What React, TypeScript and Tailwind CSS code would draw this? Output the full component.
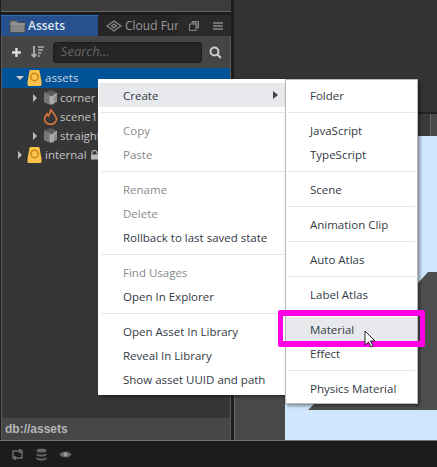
const font = "font-['Open_Sans','Liberation_Sans',sans-serif]";

function Item({ label, hi, dim, arrow }: { label: string; hi?: boolean; dim?: boolean; arrow?: boolean }) {
  return (
    <div className={`h-6 flex items-center pl-6 pr-1 justify-between text-[11.5px] ${hi ? 'bg-[#e8e9ed]' : ''} ${dim ? 'text-[#8a8a8a]' : 'text-[#333a44]'}`}>
      <span className="pt-[2px]">{label}</span>
      {arrow && <span className="border-y-[4px] border-l-[5px] border-y-transparent border-l-[#444] mr-1" />}
    </div>
  );
}
const Sep = () => <div className="h-px bg-[#e4e4ea] mx-0.5 my-[5px]" />;

function Box({ color = '#fbc24a' }: { color?: string }) {
  return (
    <svg width="15" height="18" viewBox="0 0 15 18" className="shrink-0 ml-[1px] mr-[1px]">
      <path d="M3.500 1h8a1 1 0 0 1 1 .8l2 11v2.700a1.500 1.500 0 0 1-1.500 1.500H2a1.500 1.500 0 0 1-1.500-1.500v-2.700l2-11a1 1 0 0 1 1-.8z" fill={color} />
      <circle cx="7.500" cy="8" r="3.700" fill="none" stroke="#c5841c" strokeWidth="1.400" />
    </svg>
  );
}
function Cube() {
  return (
    <svg width="15" height="15" viewBox="0 0 15 15" className="shrink-0 ml-[2px]">
      <path d="M7.500 .5l6.500 2.500v9l-6.500 2.500L1 12V3z" fill="#8f8f8f" />
      <path d="M1 3l6.500-2.500L14 3l-4 1.500-.5 3H7V5z" fill="#5a5a5a" />
      <path d="M1 3l5 2v9.500L1 12z" fill="#777777" />
      <path d="M7 6h3l4-3v2l-3 2v7l-4 .8z" fill="#a8a8a8" />
    </svg>
  );
}
function Flame() {
  return (
    <svg width="15" height="17" viewBox="0 0 15 17" className="shrink-0 ml-[2px]">
      <path d="M8 1C8.500 4.500 13.500 7 13.500 11a6 5.300 0 0 1-12 0C1.500 9 3 7.500 4 6c.5 1 1 1.500 1.500 2C6.500 6 8 3.500 8 1z" fill="none" stroke="#d8743a" strokeWidth="1.700" />
    </svg>
  );
}
function Row({ pad, label, tri, sel, icon, lock, h = 'h-[19px]' }: { pad: string; label: string; tri?: 'down' | 'right'; sel?: boolean; icon: React.ReactNode; lock?: boolean; h?: string }) {
  return (
    <div className={`${h} flex items-center text-[11.5px] ${pad} ${sel ? 'bg-[#005397] text-[#cdd6df]' : 'text-[#c4c4c4]'}`}>
      <span className="w-[13px] flex items-center justify-center shrink-0">
        {tri === 'down' && <span className="border-x-[4px] border-t-[4px] border-x-transparent border-t-[#ccc]" />}
        {tri === 'right' && <span className="border-y-[4px] border-l-[4px] border-y-transparent border-l-[#bbb]" />}
      </span>
      {icon}
      <span className="ml-[2px]">{label}</span>
      {lock && (
        <svg width="9" height="10" viewBox="0 0 9 10" className="ml-[3px]">
          <path d="M2 4.500V3a2.500 2.500 0 0 1 5 0v1.500" fill="none" stroke="#bbb" strokeWidth="1.200" />
          <rect x="1" y="4.500" width="7" height="5" fill="#bbb" />
        </svg>
      )}
    </div>
  );
}

export default function App() {
  return (
    <div className={`relative w-[437px] h-[467px] overflow-hidden bg-[#1c1c1c] ${font}`}>
      <div className="flex h-[441px] border-b border-[#757575]">
        <div className="w-[234px] shrink-0 flex flex-col">
          <div className="h-[12px] bg-[#3c3c3c] border-b border-[#666] mr-[3px] ml-px" />
          <div className="h-[3px]" />
          <div className="h-[21px] flex bg-[#252525] mr-[3px] ml-px items-stretch">
            <div className="w-[97px] bg-[#27508f] border-t border-[#2f6fc0] flex items-center pl-2 gap-[2px] text-[12px] font-semibold text-[#dfe6ef]">
              <svg width="17" height="15" viewBox="0 0 17 15" className="shrink-0"><path d="M1 1.500h6l2 2h7v10H1z" fill="#858585" stroke="#4a4a4a" /><path d="M1 5h15" stroke="#a0a0a0" /></svg>
              Assets
            </div>
            <div className="w-[80px] overflow-hidden whitespace-nowrap flex items-center pl-2 gap-[3px] text-[12px] text-[#9a9a9a]">
              <svg width="16" height="12" viewBox="0 0 16 12" className="shrink-0"><path d="M8 1l7 5-7 5-7-5zM5.500 6L8 4l2.500 2L8 8z" fill="none" stroke="#8a8a8a" strokeWidth="1.300" /></svg>
              Cloud Function
            </div>
            <div className="flex-1 bg-[#2a2a2a] flex items-center gap-[14px] pl-[11px]">
              <svg width="10" height="10" viewBox="0 0 10 10"><path d="M3 .5h6.500V7H8V2H3zM.5 3h6.500v6.500H.500z" fill="none" stroke="#8a8a8a" /></svg>
              <svg width="10" height="8" viewBox="0 0 10 8"><path d="M0 1h10M0 4h10M0 7h10" stroke="#8a8a8a" strokeWidth="1.300" /></svg>
            </div>
          </div>
          <div className="flex-1 flex flex-col mr-[3px] ml-px border-x border-[#5c5c5c] bg-[#363636]">
            <div className="h-[32px] bg-[#454545] flex items-center pl-[9px] pr-2">
              <svg width="11" height="11" viewBox="0 0 11 11"><path d="M5.500 1v9M1 5.500h9" stroke="#ddd" strokeWidth="2.400" /></svg>
              <svg width="14" height="13" viewBox="0 0 14 13" className="ml-[9px]"><path d="M3 0v10M0.500 8l2.500 3 2.500-3" fill="none" stroke="#b0b0b0" strokeWidth="1.800" /><path d="M7 1h6M7 4h5M7 7h3.500M7 10h2" stroke="#b0b0b0" strokeWidth="1.400" /></svg>
              <div className="ml-[8px] w-[150px] h-[21px] bg-[#252525] rounded-[3px] border border-[#1c1c1c] flex items-center pl-[7px] text-[13px] italic text-[#666]">Search...</div>
              <svg width="13" height="13" viewBox="0 0 13 13" className="ml-[7px]"><circle cx="5.500" cy="5.500" r="4" fill="none" stroke="#ccc" strokeWidth="2" /><path d="M8.500 8.500l3.500 3.500" stroke="#ccc" strokeWidth="2.200" /></svg>
            </div>
            <Row pad="pl-[11px]" label="assets" tri="down" sel icon={<Box />} h="h-[20px]" />
            <Row pad="pl-[26px]" label="corner" tri="right" icon={<Cube />} />
            <Row pad="pl-[26px]" label="scene1" icon={<Flame />} />
            <Row pad="pl-[26px]" label="straight" tri="right" icon={<Cube />} />
            <Row pad="pl-[11px]" label="internal" tri="right" icon={<Box />} lock />
            <div className="flex-1" />
            <div className="h-[22px] bg-[#474747] flex items-center pl-[3px] text-[12px] font-bold text-[#b5b5b5] font-['Liberation_Sans']">db://assets</div>
          </div>
        </div>
        <div className="flex-1 flex flex-col">
          <div className="h-[112px] bg-[#333333]" />
          <div className="h-[2px] bg-[#222222]" />
          <div className="h-[22px] bg-[#3a3a3a] flex justify-end">
            <div className="w-[7px] bg-[#4a4a4a] border-l border-[#666]" />
          </div>
          <div className="flex-1 flex">
            <div className="w-[51px] bg-[#484848] border-l border-[#6a6a6a]" />
            <div className="relative flex-1 bg-[#d0e6fd] overflow-hidden">
              <svg className="absolute left-0 top-0" width="152" height="304" viewBox="0 0 152 304">
                <polygon points="152,136 143,136 133,147 29,268 23,274 152,274" fill="#4e4e4e" />
              </svg>
            </div>
          </div>
        </div>
      </div>
      <div className="h-[26px] flex items-center gap-[12px] pl-[11px] pt-px">
        <svg width="13" height="11" viewBox="0 0 13 11"><path d="M2 8V2h8M11 3v6H3M8 0l3 2-3 2M5 7L2 9l3 2" fill="none" stroke="#6a6a6a" strokeWidth="1.500" /></svg>
        <svg width="11" height="13" viewBox="0 0 11 13"><ellipse cx="5.500" cy="2.500" rx="5" ry="2" fill="#666" /><path d="M.5 5c1 2 9 2 10 0v2c-1 2-9 2-10 0zM.5 9c1 2 9 2 10 0v2c-1 2-9 2-10 0z" fill="#666" /></svg>
        <svg width="13" height="9" viewBox="0 0 13 9"><path d="M.5 4.500C3 .5 10 .5 12.500 4.500 10 8.500 3 8.500.5 4.500z" fill="#666" /><circle cx="6.500" cy="4.500" r="2" fill="#999" /></svg>
      </div>

      <div className="absolute left-[98px] top-[79px] w-[188px] h-[316px] bg-white border-l border-white py-1 shadow-[2px_2px_3px_rgba(0,0,0,0.4)]">
        <Item label="Create" hi arrow />
        <Sep />
        <Item label="Copy" dim />
        <Item label="Paste" dim />
        <Sep />
        <Item label="Rename" dim />
        <Item label="Delete" dim />
        <Item label="Rollback to last saved state" />
        <Sep />
        <Item label="Find Usages" dim />
        <Item label="Open In Explorer" />
        <Sep />
        <Item label="Open Asset In Library" />
        <Item label="Reveal In Library" />
        <Item label="Show asset UUID and path" />
      </div>
      <div className="absolute left-[285px] top-[79px] w-[133px] h-[325px] bg-white border border-[#b8b8b8] pt-[3px] pb-1 shadow-[2px_2px_3px_rgba(0,0,0,0.4)]">
        <Item label="Folder" />
        <Sep />
        <Item label="JavaScript" />
        <Item label="TypeScript" />
        <Sep />
        <Item label="Scene" />
        <Sep />
        <Item label="Animation Clip" />
        <Sep />
        <Item label="Auto Atlas" />
        <Sep />
        <Item label="Label Atlas" />
        <Sep />
        <Item label="Material" hi />
        <Item label="Effect" />
        <Sep />
        <Item label="Physics Material" />
      </div>
      <div className="absolute left-[278px] top-[310px] w-[147px] h-[37px] border-x-[5px] border-y-[6px] border-[#ff00e6] rounded-[2px]" />
      <svg className="absolute left-[364px] top-[330px]" width="13" height="19" viewBox="0 0 13 19">
        <path d="M1 1v14l3.500-3 2.500 5 2-1-2.500-5H11z" fill="#fff" stroke="#222" />
      </svg>
    </div>
  );
}
